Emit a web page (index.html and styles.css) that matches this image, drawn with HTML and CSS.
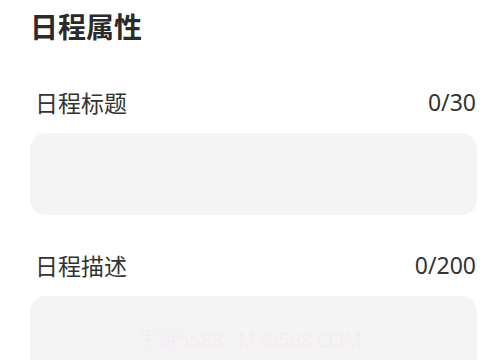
FILE: index.html
```html
<!DOCTYPE html>
<html lang="zh-CN">
<head>
<meta charset="utf-8">
<link rel="stylesheet" href="styles.css">
</head>
<body>
<div class="page">
  <h1 class="title">日程属性</h1>
  <section class="field field-first">
    <div class="field-head">
      <span class="label">日程标题</span>
      <span class="count">0/30</span>
    </div>
    <div class="box box-short"></div>
  </section>
  <section class="field">
    <div class="field-head">
      <span class="label">日程描述</span>
      <span class="count">0/200</span>
    </div>
    <div class="box box-tall">
      <span class="watermark">手游5588 · MX5588.COM</span>
    </div>
  </section>
</div>
</body>
</html>
```
FILE: styles.css
```css
html, body {
  margin: 0;
  padding: 0;
  background: #ffffff;
  overflow: hidden;
}
body {
  font-family: "Noto Sans CJK SC", "Noto Sans", sans-serif;
  color: #333333;
}
.page {
  padding: 7px 23px 0 30px;
  height: 361px;
  box-sizing: border-box;
  overflow: hidden;
}
.title {
  margin: 0;
  font-size: 28px;
  line-height: 38px;
  font-weight: 700;
  color: #2b2b2b;
}
.field {
  margin-top: 35px;
}
.field-first {
  margin-top: 42px;
}
.field-head {
  display: flex;
  justify-content: space-between;
  align-items: center;
  height: 30px;
  padding: 0 1px 0 5px;
}
.label {
  font-size: 23px;
  line-height: 30px;
  color: #333333;
}
.count {
  font-family: "Noto Sans", "Noto Sans CJK SC", sans-serif;
  font-size: 23px;
  line-height: 30px;
  color: #333333;
}
.box {
  margin-top: 16px;
  background: #f4f4f4;
  border-radius: 16px;
}
.box-short {
  height: 82px;
}
.box-tall {
  height: 64px;
  display: flex;
  justify-content: center;
  padding-top: 32px;
  box-sizing: border-box;
  padding-right: 8px;
  border-bottom-left-radius: 0;
  border-bottom-right-radius: 0;
}
.watermark {
  font-family: "Noto Sans", "Noto Sans CJK SC", sans-serif;
  font-size: 20px;
  line-height: 24px;
  font-weight: 300;
  color: #f8e8f6;
  white-space: nowrap;
}
```
